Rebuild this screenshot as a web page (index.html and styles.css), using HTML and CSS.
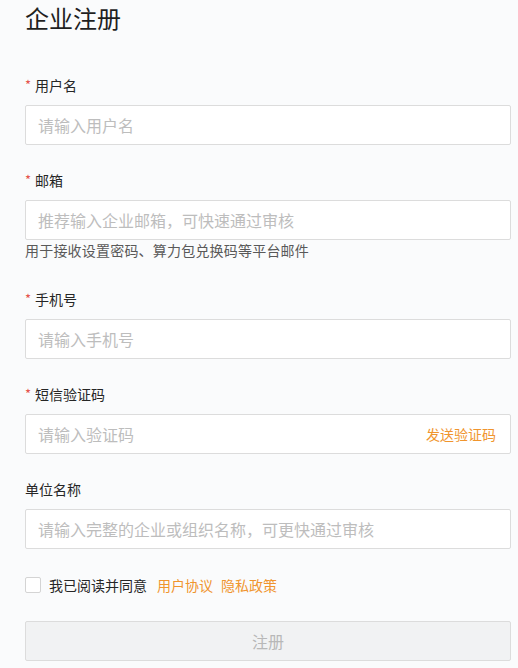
FILE: index.html
```html
<!DOCTYPE html>
<html lang="zh-CN">
<head>
<meta charset="utf-8">
<title>企业注册</title>
<link rel="stylesheet" href="styles.css">
</head>
<body>
<main class="page">
  <h1 class="title">企业注册</h1>
  <form class="form">
    <div class="field">
      <label class="label"><span class="req">*</span>用户名</label>
      <div class="input"><span class="ph">请输入用户名</span></div>
    </div>
    <div class="field">
      <label class="label"><span class="req">*</span>邮箱</label>
      <div class="input"><span class="ph">推荐输入企业邮箱，可快速通过审核</span></div>
      <div class="help">用于接收设置密码、算力包兑换码等平台邮件</div>
    </div>
    <div class="field">
      <label class="label"><span class="req">*</span>手机号</label>
      <div class="input"><span class="ph">请输入手机号</span></div>
    </div>
    <div class="field">
      <label class="label"><span class="req">*</span>短信验证码</label>
      <div class="input"><span class="ph">请输入验证码</span><span class="send">发送验证码</span></div>
    </div>
    <div class="field">
      <label class="label">单位名称</label>
      <div class="input"><span class="ph">请输入完整的企业或组织名称，可更快通过审核</span></div>
    </div>
    <div class="agree">
      <span class="box"></span>
      <span class="agree-text">我已阅读并同意</span>
      <a class="link">用户协议</a>
      <a class="link">隐私政策</a>
    </div>
    <div class="submit">注册</div>
  </form>
</main>
</body>
</html>
```
FILE: styles.css
```css
html, body {
  margin: 0;
  padding: 0;
  background: #fafbfc;
}
body {
  font-family: "Noto Sans CJK SC", "Noto Sans", sans-serif;
  color: #262626;
}
.page {
  padding: 0 7px 0 25px;
}
.title {
  margin: 0;
  font-size: 24px;
  line-height: 36px;
  font-weight: 400;
  color: #1f1f1f;
}
.form {
  display: flex;
  flex-direction: column;
  gap: 25px;
  margin-top: 39px;
}
.field {
  display: flex;
  flex-direction: column;
}
.label {
  font-size: 14px;
  line-height: 20px;
  color: #262626;
  margin-bottom: 10px;
  display: flex;
  align-items: center;
}
.req {
  color: #e5534b;
  margin-right: 4px;
  font-size: 13px;
}
.input {
  box-sizing: border-box;
  height: 40px;
  border: 1px solid #dcdcdc;
  border-radius: 2px;
  background: #fff;
  display: flex;
  align-items: center;
  justify-content: space-between;
  padding: 0 14px 0 12px;
}
.ph {
  font-size: 16px;
  color: #bdbdbd;
}
.send {
  font-size: 14px;
  color: #f0952e;
}
.help {
  font-size: 14px;
  line-height: 20px;
  color: #595959;
  margin-bottom: 4px;
  letter-spacing: 0.2px;
}
.agree {
  display: flex;
  align-items: center;
  height: 22px;
  font-size: 14px;
}
.box {
  box-sizing: border-box;
  width: 16px;
  height: 16px;
  border: 1px solid #d4d4d4;
  border-radius: 2px;
  background: #fff;
  margin-right: 8px;
}
.agree-text {
  color: #262626;
  margin-right: 10px;
}
.link {
  color: #f0952e;
  margin-right: 8px;
}
.submit {
  box-sizing: border-box;
  height: 40px;
  border: 1px solid #dcdcdc;
  border-radius: 2px;
  background: #f1f2f3;
  display: flex;
  align-items: center;
  justify-content: center;
  font-size: 16px;
  color: #b8b8b8;
}
```
